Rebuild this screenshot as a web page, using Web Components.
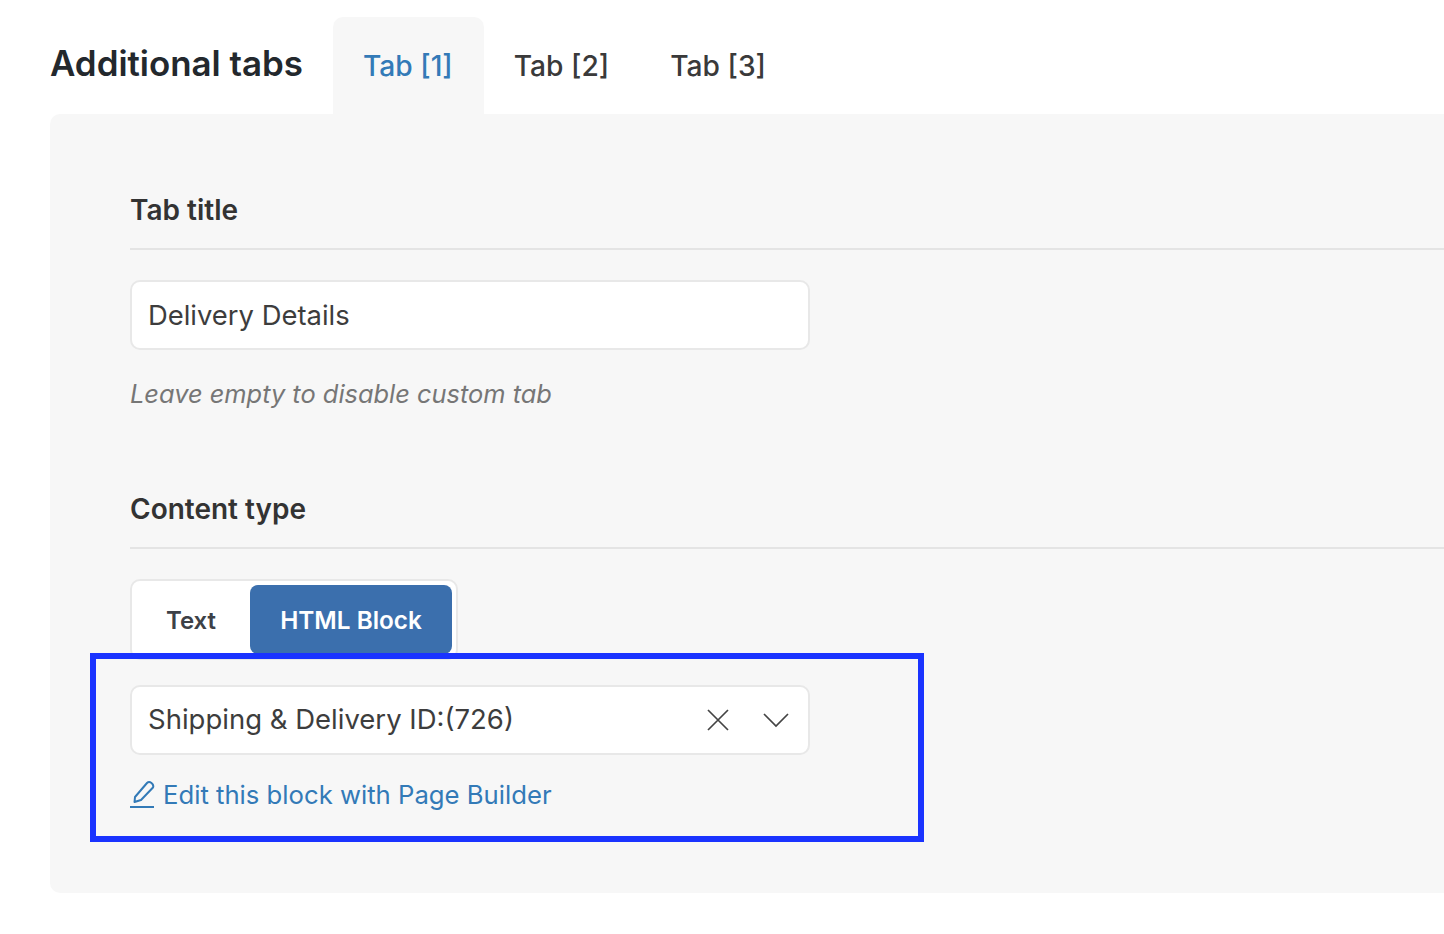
<!DOCTYPE html>
<html lang="en">
<head>
<meta charset="utf-8">
<title>Additional tabs</title>
<style>
  html, body { margin: 0; background: #fff; }
  body { font-family: Inter, "Liberation Sans", sans-serif; color: #333; overflow: hidden; }
</style>
</head>
<body>
<tabs-page>
  <section-title>Tab title</section-title>
  <text-field>Delivery Details</text-field>
  <field-hint>Leave empty to disable custom tab</field-hint>
  <section-title style="margin-top: 69px">Content type</section-title>
  <type-toggle></type-toggle>
  <block-select>Shipping &amp; Delivery ID:(726)</block-select>
  <edit-link>Edit this block with Page Builder</edit-link>
</tabs-page>

<script>
/**
 * Page shell: heading, tab strip and the grey panel.
 */
customElements.define('tabs-page',
  class extends HTMLElement {
    constructor () {
      super()
      this.attachShadow({ mode: 'open' }).innerHTML = `
        <style>
          :host { display: block; height: 934px; padding: 17px 0 0 50px; box-sizing: border-box; position: relative; }
          #head { display: flex; align-items: stretch; height: 97px; }
          h2 { margin: 0 31px 0 0; width: 252px; font-size: 34.9px; font-weight: 600; color: #23282d; line-height: 93px; white-space: nowrap; }
          .tab { padding: 0 31px 0 30px; font-size: 28.2px; font-weight: 500; line-height: 99px; height: 97px; color: #3a3a3a; }
          .tab.active { color: #337ab7; background: #f7f7f7; border-radius: 10px 10px 0 0; }
          #panel { background: #f7f7f7; border-radius: 10px 0 0 10px; height: 779px; padding: 0 0 0 80px; box-sizing: border-box; overflow: hidden; }
          #mark { position: absolute; left: 90px; top: 653px; width: 834px; height: 189px; box-sizing: border-box; border: 6px solid #1a33ff; }
        </style>
        <div id="head">
          <h2>Additional tabs</h2>
          <div class="tab active">Tab [1]</div>
          <div class="tab">Tab [2]</div>
          <div class="tab">Tab [3]</div>
        </div>
        <div id="panel"><slot></slot></div>
        <div id="mark"></div>
      `
    }
  }
)

customElements.define('section-title',
  class extends HTMLElement {
    constructor () {
      super()
      this.attachShadow({ mode: 'open' }).innerHTML = `
        <style>
          :host { display: block; margin-top: 67px; height: 69px; box-sizing: border-box; border-bottom: 2px solid #e4e4e4; font-size: 28px; font-weight: 600; line-height: 58px; color: #333; }
        </style>
        <slot></slot>
      `
    }
  }
)

const fieldStyle = `
  width: 680px; height: 70px; box-sizing: border-box;
  background: #fff; border: 2px solid #e8e8e8; border-radius: 10px;
  font-size: 27.4px; color: #3d3d3d;
`

customElements.define('text-field',
  class extends HTMLElement {
    constructor () {
      super()
      this.attachShadow({ mode: 'open' }).innerHTML = `
        <style>
          :host { display: flex; align-items: center; margin-top: 30px; padding-left: 16px; ${fieldStyle} }
        </style>
        <slot></slot>
      `
    }
  }
)

customElements.define('field-hint',
  class extends HTMLElement {
    constructor () {
      super()
      this.attachShadow({ mode: 'open' }).innerHTML = `
        <style>
          :host { display: block; margin-top: 27px; font-size: 25.4px; line-height: 34px; font-style: italic; color: #767676; }
        </style>
        <slot></slot>
      `
    }
  }
)

customElements.define('type-toggle',
  class extends HTMLElement {
    constructor () {
      super()
      this.attachShadow({ mode: 'open' }).innerHTML = `
        <style>
          :host { display: flex; width: 328px; height: 81px; margin-top: 30px; padding: 4px; box-sizing: border-box; background: #fff; border: 2px solid #e8e8e8; border-radius: 10px; font-size: 24.3px; font-weight: 600; }
          div { display: flex; align-items: center; justify-content: center; border-radius: 8px; }
          #text { width: 110px; margin-right: 4px; padding-top: 2px; box-sizing: border-box; font-size: 24px; color: #3d4147; }
          #html { width: 202px; color: #fff; background: #3b6fad; }
        </style>
        <div id="text">Text</div>
        <div id="html">HTML Block</div>
      `
    }
  }
)

customElements.define('block-select',
  class extends HTMLElement {
    constructor () {
      super()
      this.attachShadow({ mode: 'open' }).innerHTML = `
        <style>
          :host { display: flex; align-items: center; margin-top: 25px; padding: 0 19px 0 16px; ${fieldStyle} font-size: 27.5px; }
          span { flex: 1; margin-bottom: 2px; }
          svg { display: block; fill: none; stroke: #444; stroke-width: 1.7; }
          #clear { margin-right: 33px; }
        </style>
        <span><slot></slot></span>
        <svg id="clear" width="24" height="24" viewBox="0 0 24 24"><path d="M2 2 22 22M22 2 2 22"/></svg>
        <svg width="26" height="16" viewBox="0 0 26 16"><path d="M1 2 13 14 25 2"/></svg>
      `
    }
  }
)

customElements.define('edit-link',
  class extends HTMLElement {
    constructor () {
      super()
      this.attachShadow({ mode: 'open' }).innerHTML = `
        <style>
          :host { display: flex; align-items: center; gap: 8px; margin-top: 23px; font-size: 25.7px; line-height: 34px; color: #337ab7; }
          svg { display: block; fill: none; stroke: currentColor; stroke-width: 2; stroke-linejoin: round; }
        </style>
        <svg width="25" height="28" viewBox="0 0 25 28" style="margin-top: -3px"><path d="M5 17 17 3Q19 1 21.500 3T23 7.500L11 20 4.500 22Z"/><path d="M0 27H24"/></svg>
        <span><slot></slot></span>
      `
    }
  }
)
</script>
</body>
</html>
